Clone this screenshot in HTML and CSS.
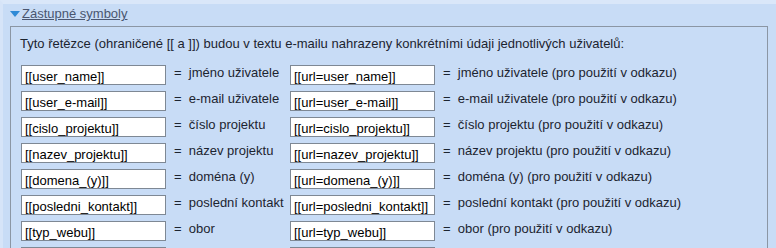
FILE: index.html
```html
<!DOCTYPE html>
<html lang="cs">
<head>
    <meta charset="UTF-8">
    <title>Zástupné symboly</title>
    <link rel="stylesheet" href="styles.css">
</head>
<body>
    <div class="section">
        <div class="section-head">
            <span class="toggle"></span>
            <a href="#" class="section-link">Zástupné symboly</a>
        </div>

        <div class="panel">
            <p class="intro">Tyto řetězce (ohraničené [[ a ]]) budou v textu e-mailu nahrazeny konkrétními údaji jednotlivých uživatelů:</p>

            <div class="symbols">
                <input type="text" class="symbol" value="[[user_name]]" readonly>
                <span class="desc">=&nbsp; jméno uživatele</span>
                <input type="text" class="symbol" value="[[url=user_name]]" readonly>
                <span class="desc">=&nbsp; jméno uživatele (pro použití v odkazu)</span>

                <input type="text" class="symbol" value="[[user_e-mail]]" readonly>
                <span class="desc">=&nbsp; e-mail uživatele</span>
                <input type="text" class="symbol" value="[[url=user_e-mail]]" readonly>
                <span class="desc">=&nbsp; e-mail uživatele (pro použití v odkazu)</span>

                <input type="text" class="symbol" value="[[cislo_projektu]]" readonly>
                <span class="desc">=&nbsp; číslo projektu</span>
                <input type="text" class="symbol" value="[[url=cislo_projektu]]" readonly>
                <span class="desc">=&nbsp; číslo projektu (pro použití v odkazu)</span>

                <input type="text" class="symbol" value="[[nazev_projektu]]" readonly>
                <span class="desc">=&nbsp; název projektu</span>
                <input type="text" class="symbol" value="[[url=nazev_projektu]]" readonly>
                <span class="desc">=&nbsp; název projektu (pro použití v odkazu)</span>

                <input type="text" class="symbol" value="[[domena_(y)]]" readonly>
                <span class="desc">=&nbsp; doména (y)</span>
                <input type="text" class="symbol" value="[[url=domena_(y)]]" readonly>
                <span class="desc">=&nbsp; doména (y) (pro použití v odkazu)</span>

                <input type="text" class="symbol" value="[[posledni_kontakt]]" readonly>
                <span class="desc">=&nbsp; poslední kontakt</span>
                <input type="text" class="symbol" value="[[url=posledni_kontakt]]" readonly>
                <span class="desc">=&nbsp; poslední kontakt (pro použití v odkazu)</span>

                <input type="text" class="symbol" value="[[typ_webu]]" readonly>
                <span class="desc">=&nbsp; obor</span>
                <input type="text" class="symbol" value="[[url=typ_webu]]" readonly>
                <span class="desc">=&nbsp; obor (pro použití v odkazu)</span>

                <!-- next row starts just below the fold -->
                <input type="text" class="symbol" readonly>
                <span class="desc"></span>
                <input type="text" class="symbol" readonly>
                <span class="desc"></span>
            </div>
        </div>
    </div>
</body>
</html>
```

FILE: styles.css
```css
body {
    margin: 0;
    padding: 0;
    background: #c8dcf6;
    font-family: 'Liberation Sans', Arial, sans-serif;
    font-size: 13px;
    color: #1c2430;
    overflow: hidden;
}

.section {
    border-top: 4px solid #dae7f9;
    border-left: 3px solid #d6e4f8;
    padding: 0 0 0 7px;
}

.section-head {
    display: flex;
    align-items: center;
    height: 17px;
    padding-top: 1px;
}

.toggle {
    width: 0;
    height: 0;
    border-left: 5px solid transparent;
    border-right: 5px solid transparent;
    border-top: 6px solid #2f8ad6;
    margin-right: 2px;
    margin-top: 1px;
}

.section-link {
    color: #4a5670;
    text-decoration: underline;
    font-size: 13px;
}

.panel {
    width: 758px;
    margin-top: 4px;
    border: 1px solid #8b96a4;
    padding: 9px 0 0 9px;
    box-sizing: border-box;
    height: 300px;
}

.intro {
    margin: 0 0 13px 0;
    line-height: 16px;
}

.symbols {
    display: grid;
    grid-template-columns: 145px 108px 145px auto;
    column-gap: 8px;
    row-gap: 6px;
    padding-left: 1px;
}

.symbol {
    box-sizing: border-box;
    width: 145px;
    height: 20px;
    margin: 0;
    padding: 2px 3px 0;
    border: 1px solid #7e8894;
    background: #fff;
    font-family: 'Liberation Sans', Arial, sans-serif;
    font-size: 13px;
    color: #000;
    outline: none;
}

.desc {
    line-height: 16px;
    white-space: nowrap;
}
```
